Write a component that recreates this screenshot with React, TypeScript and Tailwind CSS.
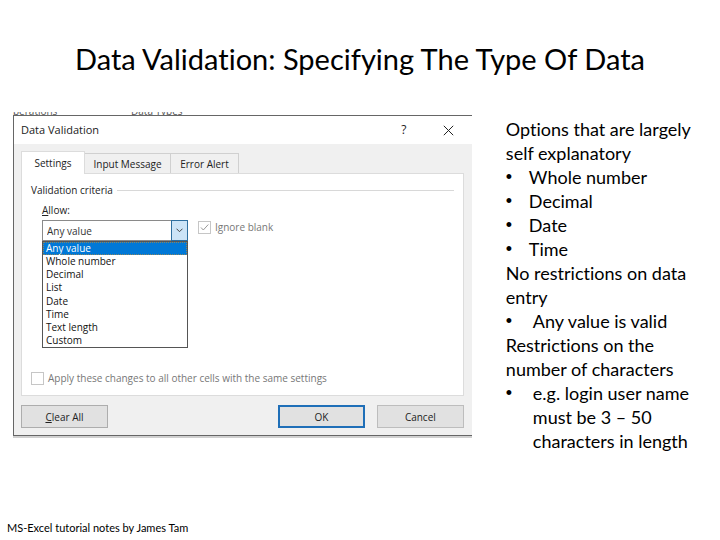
import { useState } from "react";

const allowOptions = [
  "Any value",
  "Whole number",
  "Decimal",
  "List",
  "Date",
  "Time",
  "Text length",
  "Custom",
];

const Bullet = ({ children, wide = false }: { children: React.ReactNode; wide?: boolean }) => (
  <li className={wide ? "grid grid-cols-[27px_1fr]" : "grid grid-cols-[23px_1fr]"}>
    <span aria-hidden="true" className="font-['Liberation_Sans',sans-serif]">•</span>
    <span>{children}</span>
  </li>
);

const TitleBar = () => (
  <header className="flex h-[28px] items-center bg-white pl-[7px] text-[#222]">
    <h2 className="flex-1 text-[11px] leading-[16px]">Data Validation</h2>
    <button type="button" aria-label="Help" className="w-[44px] text-[12px] leading-[16px]">
      ?
    </button>
    <button type="button" aria-label="Close" className="flex w-[46px] justify-center">
      <svg width="11" height="11" viewBox="0 0 11 11" stroke="#222" fill="none">
        <path d="M0.8 0.8 L10.2 10.2 M10.2 0.8 L0.8 10.2" />
      </svg>
    </button>
  </header>
);

const AllowField = () => {
  const [value, setValue] = useState("Any value");

  return (
    <div className="relative w-[146px]">
      <select
        id="allow"
        value={value}
        onChange={(e) => setValue(e.target.value)}
        className="block h-[21px] w-full appearance-none border border-[#8a8a8a] bg-white pl-[4px] text-[10px] leading-[14px] text-[#333] outline-none"
      >
        {allowOptions.map((option) => (
          <option key={option}>{option}</option>
        ))}
      </select>
      <span className="pointer-events-none absolute top-0 right-0 flex h-[21px] w-[17px] items-center justify-center border border-[#2f6f9f] bg-[#cce4f7]">
        <svg width="7" height="5" viewBox="0 0 7 5" fill="none" stroke="#444">
          <path d="M0.5 0.7 L3.5 3.7 L6.5 0.7" />
        </svg>
      </span>

      {/* Open list */}
      <ul
        role="listbox"
        aria-label="Allow"
        className="absolute top-[21px] left-0 grid h-[107px] w-full grid-rows-8 border border-[#555] bg-white text-[10px] leading-[13px] text-[#111]"
      >
        {allowOptions.map((option) => (
          <li
            key={option}
            role="option"
            aria-selected={option === value}
            onClick={() => setValue(option)}
            className="pl-[3px] aria-selected:bg-[#0078d7] aria-selected:text-white aria-selected:outline aria-selected:-outline-offset-1 aria-selected:outline-dotted aria-selected:outline-[#8a8560]"
          >
            {option}
          </li>
        ))}
      </ul>
    </div>
  );
};

const ValidationDialog = () => (
  <section className="font-['Open_Sans',sans-serif]">
    {/* Sliver of the worksheet that shows above the dialog */}
    <div aria-hidden="true" className="flex h-[3px] items-end overflow-hidden text-[10px] leading-[8px] text-[#555]">
      <span className="w-[118px]">perations</span>
      <span>Data Types</span>
    </div>
    <div className="border-t border-b border-l border-[#666] bg-[#f0f0f0]">
      <TitleBar />
      <div className="pt-[7px] pr-[8px] pb-[7px] pl-[7px]">
        <div role="tablist" className="flex items-end text-[10px] leading-[14px] text-[#222]">
          <button type="button" role="tab" aria-selected="true" className="z-10 -mb-px h-[23px] w-[64px] border border-b-0 border-[#dcdcdc] bg-white">
            Settings
          </button>
          <button type="button" role="tab" aria-selected="false" className="h-[20px] w-[86px] border border-b-0 border-l-0 border-[#d0d0d0]">
            Input Message
          </button>
          <button type="button" role="tab" aria-selected="false" className="h-[20px] w-[68px] border border-b-0 border-l-0 border-[#d0d0d0]">
            Error Alert
          </button>
        </div>

        <div role="tabpanel" className="flex h-[223px] flex-col border border-[#dcdcdc] bg-white px-[9px] pt-[9px] pb-[10px] text-[10px] leading-[14px] text-[#222]">
          <div className="flex items-center gap-[4px]">
            <span>Validation criteria</span>
            <span className="h-px flex-1 bg-[#d8d8d8]"></span>
          </div>
          <label htmlFor="allow" className="mt-[6px] ml-[11px] self-start">
            <u>A</u>llow:
          </label>
          <div className="mt-[3px] ml-[11px] flex items-start gap-[10px]">
            <AllowField />
            <label className="flex items-center gap-[4px] text-[#777]">
              <span className="grid size-[13px]">
                <input
                  type="checkbox"
                  disabled
                  checked
                  readOnly
                  className="col-start-1 row-start-1 size-[13px] appearance-none border border-[#c6c6c6] bg-white"
                />
                <svg className="col-start-1 row-start-1" width="13" height="13" viewBox="0 0 13 13" fill="none" stroke="#999">
                  <path d="M3 6.5 L5.3 9 L10.3 3.5" />
                </svg>
              </span>
              Ignore blank
            </label>
          </div>
          <label className="mt-auto flex items-center gap-[4px] self-start text-[#777]">
            <input type="checkbox" disabled className="size-[13px] appearance-none border border-[#c6c6c6] bg-white" />
            Apply these changes to all other cells with the same settings
          </label>
        </div>

        <div className="mt-[9px] flex justify-between text-[10px] leading-[14px] text-[#222]">
          <button type="button" className="h-[23px] w-[87px] border border-[#adadad] bg-[#e1e1e1]">
            <u>C</u>lear All
          </button>
          <div className="flex gap-[12px]">
            <button type="button" className="h-[23px] w-[87px] border-2 border-[#1f6fb8] bg-[#e1e1e1]">
              OK
            </button>
            <button type="button" className="h-[23px] w-[87px] border border-[#bdbdbd] bg-[#e1e1e1]">
              Cancel
            </button>
          </div>
        </div>
      </div>
    </div>
    <div className="h-[2px] bg-[#d0d0d0]"></div>
  </section>
);

export default function App() {
  return (
    <div className="flex min-h-screen flex-col bg-white font-['Lato',sans-serif] text-black [font-variant-ligatures:none]">
      <h1 className="pt-[39px] text-center text-[29px] leading-[40px]">
        Data Validation: Specifying The Type Of Data
      </h1>
      <main className="mt-[33px] grid grid-cols-[69fr_31fr] items-start gap-[34px] pr-[8px] pl-[13px]">
        <ValidationDialog />
        <div className="mt-[5px] text-[18px] leading-[24px]">
          <p>Options that are largely self explanatory</p>
          <ul>
            <Bullet>Whole number</Bullet>
            <Bullet>Decimal</Bullet>
            <Bullet>Date</Bullet>
            <Bullet>Time</Bullet>
          </ul>
          <p>No restrictions on data entry</p>
          <ul>
            <Bullet wide>Any value is valid</Bullet>
          </ul>
          <p>Restrictions on the number of characters</p>
          <ul>
            <Bullet wide>e.g. login user name must be 3 – 50 characters in length</Bullet>
          </ul>
        </div>
      </main>
      <footer className="mt-auto pb-[4px] pl-[7px] text-[11px] leading-[16px]">
        MS-Excel tutorial notes by James Tam
      </footer>
    </div>
  );
}
